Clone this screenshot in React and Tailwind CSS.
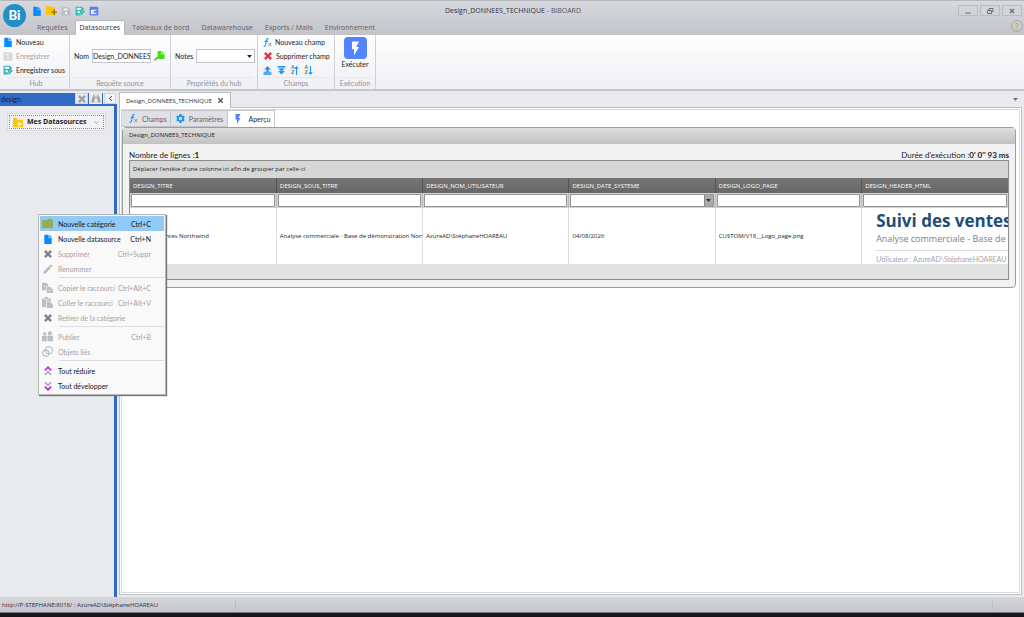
import { LuChevronLeft, LuChevronDown } from 'react-icons/lu';
import { MdSettings, MdFlashOn, MdEdit } from 'react-icons/md';
import { FaBinoculars } from 'react-icons/fa';

const FileIcon = ({ className = 'text-[#0a8cff]' }) => (
  <svg viewBox="0 0 16 16" className={`h-[10px] w-[10px] shrink-0 ${className}`} fill="currentColor">
    <path d="M3 1h6v5h5v9a1 1 0 0 1-1 1H3a1 1 0 0 1-1-1V2a1 1 0 0 1 1-1z" />
    <path d="M10 1l4 4h-4z" />
  </svg>
);

const SaveIcon = ({ className = 'text-[#d3d4d7]' }) => (
  <svg viewBox="0 0 16 16" className={`h-[10px] w-[10px] shrink-0 ${className}`}>
    <path d="M1 2h11l3 3v10H1z" fill="currentColor" />
    <path d="M4 4h7v3H4z" fill="#f0f0f2" />
    <circle cx="8" cy="11" r="2" fill="#f0f0f2" />
  </svg>
);

const SaveAsIcon = () => (
  <svg viewBox="0 0 16 16" className="h-[10px] w-[10px] shrink-0">
    <path d="M1 1h10l3 3v5l-5 6H1z" fill="#35b8b4" />
    <path d="M3 3h7v3H3z" fill="#fff" />
    <circle cx="6" cy="10" r="2" fill="#fff" />
    <path d="M8 13l6-6 2 2-6 6H8z" fill="#27a39f" stroke="#fff" strokeWidth="0.8" />
  </svg>
);

const FolderPlusIcon = () => (
  <svg viewBox="0 0 16 16" className="h-[11px] w-[11px] shrink-0">
    <path d="M0 1h5l2 2h6v11H0z" fill="#fdc504" />
    <path d="M12 6v9M7.500 10.500h9" stroke="#a8780c" strokeWidth="2.200" />
  </svg>
);

const WindowIcon = () => (
  <svg viewBox="0 0 16 16" className="h-[10px] w-[10px] shrink-0">
    <rect x="1" y="1" width="14" height="14" rx="2" fill="#5a7ff2" />
    <path d="M3 6h9v7H3z" fill="#e8eeff" />
    <path d="M8 8h6v3H8z" fill="#5a7ff2" />
  </svg>
);

const CrossIcon = ({ className = 'text-[#828386]' }) => (
  <svg viewBox="0 0 16 16" className={`h-[10px] w-[10px] shrink-0 ${className}`}>
    <path d="M3 3l10 10M13 3L3 13" stroke="currentColor" strokeWidth="4" />
  </svg>
);

const FolderIcon = () => (
  <svg viewBox="0 0 16 16" className="h-[11px] w-[11px] shrink-0" fill="#96ad58">
    <path d="M0 3h8l1-2h5v2h2v12H0z" />
  </svg>
);

const LinkedIcon = () => (
  <svg viewBox="0 0 16 16" className="h-[11px] w-[11px] shrink-0" fill="none" stroke="#b9babc" strokeWidth="1.500">
    <circle cx="10" cy="6" r="5" />
    <circle cx="5.500" cy="10.500" r="4.500" />
  </svg>
);

const CopyIcon = () => (
  <svg viewBox="0 0 16 16" className="h-[11px] w-[11px] shrink-0" fill="#bdbec0">
    <path d="M0 1h6l3 3v2H6v6H0z" />
    <path d="M7 7h5l4 4v5H7z" />
    <path d="M2 6h3M9 12h5" stroke="#eee" strokeWidth="1.200" />
  </svg>
);

const PasteIcon = () => (
  <svg viewBox="0 0 16 16" className="h-[11px] w-[11px] shrink-0" fill="#bdbec0">
    <path d="M0 2h4V0h5v2h4v4H6v9H0z" />
    <path d="M7 7h5l4 4v5H7z" />
    <path d="M3 4h7" stroke="#eee" strokeWidth="1.200" />
  </svg>
);

const PublishIcon = () => (
  <svg viewBox="0 0 16 16" className="h-[11px] w-[11px] shrink-0" fill="#bdbec0">
    <circle cx="4" cy="4" r="2.500" />
    <circle cx="11.500" cy="3.500" r="3" />
    <path d="M0 7h7v8H0zM8 7h8v8H8z" />
  </svg>
);

const FxIcon = () => (
  <svg viewBox="0 0 16 16" className="h-[9px] w-[9px] shrink-0" fill="none" stroke="#1e93f5">
    <path d="M10 1.500C8 .5 6.800 1.500 6.300 4L4.500 12c-.5 2.300-1.500 3-3.500 2.300M3 6h6" strokeWidth="2" />
    <path d="M9.500 8.500l5.500 6M15 8.500l-5.500 6" strokeWidth="1.600" stroke="#6a8fb5" />
  </svg>
);

const MoveUpIcon = () => (
  <svg viewBox="0 0 16 16" className="h-[9px] w-[9px]" fill="#1e93f5">
    <path d="M8 0l6 6h-4v4H6V6H2zM1 10h14v2H1zM1 13h14v2.500H1z" />
  </svg>
);

const MoveDownIcon = () => (
  <svg viewBox="0 0 16 16" className="h-[9px] w-[9px]" fill="#1e93f5">
    <path d="M1 0h14v2.500H1zM3 4h10v2H3zM6 6h4v3h4l-6 6-6-6h4z" />
  </svg>
);

const SortIcon = ({ down }) => (
  <span className="flex items-center">
    <span className="text-[5px]/[5px] font-bold text-[#666]">A<br />Z</span>
    <svg viewBox="0 0 8 16" className={`h-[9px] w-[5px] ${down ? 'rotate-180' : ''}`} fill="#1e93f5">
      <path d="M4 0l4 5H5v11H3V5H0z" />
    </svg>
  </span>
);

const LinkPlugIcon = () => (
  <svg viewBox="0 0 18 16" className="h-[10px] w-[11px] shrink-0">
    <path d="M1 15l5-5" stroke="#999" strokeWidth="3" />
    <path d="M6 0h6v5h5v8H6z" fill="#3fe012" />
    <path d="M13 0l4 4h-4z" fill="#3fe012" />
  </svg>
);

const DoubleChevron = ({ down }) => (
  <svg viewBox="0 0 16 16" className={`h-[10px] w-[10px] ${down ? 'rotate-180' : ''}`} fill="none" strokeWidth="2.600">
    <path d="M3 7l5-5 5 5" stroke="#c818ee" />
    <path d="M3 14l5-5 5 5" stroke="#a8a8a8" />
  </svg>
);

const Caret = ({ className = '' }) => (
  <svg viewBox="0 0 8 5" className={`h-[3px] w-[5px] ${className}`} fill="currentColor">
    <path d="M0 0h8L4 5z" />
  </svg>
);

const ribbonTabs = ['Requêtes', 'Datasources', 'Tableaux de bord', 'Datawarehouse', 'Exports / Mails', 'Environnement'];

const columns = [
  { name: 'DESIGN_TITRE', value: 'Suivi des ventes Northwind' },
  { name: 'DESIGN_SOUS_TITRE', value: 'Analyse commerciale - Base de démonstration Northwind' },
  { name: 'DESIGN_NOM_UTILISATEUR', value: 'AzureAD\\StéphaneHOAREAU' },
  { name: 'DESIGN_DATE_SYSTEME', value: '04/08/2026', date: true },
  { name: 'DESIGN_LOGO_PAGE', value: 'CUSTOM/V18__Logo_page.png' },
  { name: 'DESIGN_HEADER_HTML', html: true },
];

const menuGroups = [
  [
    { label: 'Nouvelle catégorie', keys: 'Ctrl+C', icon: <FolderIcon />, active: true },
    { label: 'Nouvelle datasource', keys: 'Ctrl+N', icon: <FileIcon /> },
    { label: 'Supprimer', keys: 'Ctrl+Suppr', icon: <CrossIcon />, disabled: true },
    { label: 'Renommer', icon: <MdEdit className="h-[12px] w-[12px] text-[#b9babc]" />, disabled: true },
  ],
  [
    { label: 'Copier le raccourci', keys: 'Ctrl+Alt+C', icon: <CopyIcon />, disabled: true },
    { label: 'Coller le raccourci', keys: 'Ctrl+Alt+V', icon: <PasteIcon />, disabled: true },
    { label: 'Retirer de la catégorie', icon: <CrossIcon />, disabled: true },
  ],
  [
    { label: 'Publier', keys: 'Ctrl+B', icon: <PublishIcon />, disabled: true },
    { label: 'Objets liés', icon: <LinkedIcon />, disabled: true },
  ],
  [
    { label: 'Tout réduire', icon: <DoubleChevron /> },
    { label: 'Tout développer', icon: <DoubleChevron down /> },
  ],
];

const RibbonGroup = ({ title, className, children }) => (
  <section className={`flex flex-col border-r border-[#cfd0d5] ${className}`}>
    <div className="flex grow flex-col justify-center">{children}</div>
    <h2 className="mx-1 border-t border-[#e6e7ea] pb-px text-center text-[7px]/[10px] text-[#92939c]">{title}</h2>
  </section>
);

const RibbonButton = ({ icon, label, disabled }) => (
  <button disabled={disabled} className="flex h-[14px] items-center gap-[3px] whitespace-nowrap disabled:text-[#a3a4a8]">
    {icon}
    {label}
  </button>
);

const TitleBar = () => (
  <header className="relative bg-linear-to-b from-[#d9dade] to-[#c3c4ca]">
    <div className="grid h-[20px] grid-cols-[1fr_auto_1fr] items-center border-t border-[#b8b9be] pr-[2px]">
      <div className="flex items-center gap-1 pl-[32px]">
        <button aria-label="Nouveau"><FileIcon /></button>
        <button aria-label="Nouvelle catégorie"><FolderPlusIcon /></button>
        <button aria-label="Enregistrer"><SaveIcon className="text-[#bcbdc1]" /></button>
        <button aria-label="Enregistrer sous"><SaveAsIcon /></button>
        <button aria-label="Fenêtre"><WindowIcon /></button>
      </div>
      <h1 className="pl-1 font-['Open_Sans',sans-serif] text-[#55565f]">
        <span className="text-[#2c2d3a]">Design_DONNEES_TECHNIQUE</span> - BiBOARD
      </h1>
      <div className="flex justify-end gap-[2px] text-[#6d6e78]">
        <button aria-label="Réduire" className="grid h-[11px] w-[20px] place-items-center border border-[#bcbdc3] bg-[#d4d5da]">
          <svg viewBox="0 0 8 8" className="h-2 w-2"><path d="M1 6h6" stroke="currentColor" /></svg>
        </button>
        <button aria-label="Restaurer" className="grid h-[11px] w-[20px] place-items-center border border-[#bcbdc3] bg-[#d4d5da]">
          <svg viewBox="0 0 8 8" className="h-2 w-2" fill="none" stroke="currentColor"><path d="M3 3V1.500h4v3H5.500M1.500 3.500h4v3h-4z" /></svg>
        </button>
        <button aria-label="Fermer" className="grid h-[11px] w-[20px] place-items-center border border-[#bcbdc3] bg-[#d4d5da]">
          <svg viewBox="0 0 8 8" className="h-2 w-2"><path d="M2 2l4 4M6 2L2 6" stroke="currentColor" strokeWidth="1.300" /></svg>
        </button>
      </div>
    </div>
    <nav className="flex h-[15px] items-stretch pl-[31px] font-['Open_Sans',sans-serif] text-[#5d5e6a]">
      {ribbonTabs.map((tab) => (
        <button
          key={tab}
          className={tab === 'Datasources' ? 'mx-px border border-b-0 border-[#b9bac0] bg-white px-1 text-[#2c2d3a]' : 'px-[6px]'}
        >
          {tab}
        </button>
      ))}
    </nav>
    <div className="absolute top-[4px] left-[3px] grid h-[23px] w-[23px] place-items-center rounded-full bg-[#1f8fcc] text-[13px]/[13px] font-black text-white">
      Bi
    </div>
    <button aria-label="Aide" className="absolute right-px bottom-[3px] grid h-[12px] w-[12px] place-items-center rounded-full border border-[#a9aab0] text-[10px]/[10px] font-bold text-[#f5a81c]">
      ?
    </button>
  </header>
);

const Ribbon = () => (
  <div className="flex h-[56px] border-b-2 border-[#c5c6cc] bg-linear-to-b from-white to-[#eff0f4] text-[#22232b]">
    <RibbonGroup title="Hub" className="w-[70px] pl-[3px]">
      <RibbonButton icon={<FileIcon />} label="Nouveau" />
      <RibbonButton icon={<SaveIcon />} label="Enregistrer" disabled />
      <RibbonButton icon={<SaveAsIcon />} label="Enregistrer sous" />
    </RibbonGroup>
    <RibbonGroup title="Requête source" className="w-[101px]">
      <div className="flex items-center gap-[3px] pl-1">
        <label htmlFor="nom">Nom</label>
        <input id="nom" defaultValue="Design_DONNEES_TECHNIQUE" className="h-[14px] w-[59px] border border-[#c3c4cb] bg-white" />
        <button aria-label="Lier"><LinkPlugIcon /></button>
      </div>
    </RibbonGroup>
    <RibbonGroup title="Propriétés du hub" className="w-[87px]">
      <div className="flex items-center gap-[3px] pl-1">
        <label htmlFor="notes">Notes</label>
        <div className="relative">
          <select id="notes" className="block h-[14px] w-[59px] appearance-none border border-[#c3c4cb] bg-white">
            <option></option>
          </select>
          <Caret className="pointer-events-none absolute top-[6px] right-[3px]" />
        </div>
      </div>
    </RibbonGroup>
    <RibbonGroup title="Champs" className="w-[77px]">
      <div className="pl-[5px]">
        <RibbonButton icon={<FxIcon />} label="Nouveau champ" />
        <RibbonButton icon={<CrossIcon className="text-[#e8324f]" />} label="Supprimer champ" />
        <div className="flex h-[14px] items-center gap-[5px]">
          <button aria-label="Monter"><MoveUpIcon /></button>
          <button aria-label="Descendre"><MoveDownIcon /></button>
          <button aria-label="Tri croissant"><SortIcon /></button>
          <button aria-label="Tri décroissant"><SortIcon down /></button>
        </div>
      </div>
    </RibbonGroup>
    <RibbonGroup title="Exécution" className="w-[41px]">
      <button className="flex h-full flex-col items-center pt-[2px]">
        <span className="grid h-[22px] w-[23px] place-items-center rounded-sm bg-[#5384ff]">
          <MdFlashOn className="h-[17px] w-[17px] text-white" />
        </span>
        Exécuter
      </button>
    </RibbonGroup>
  </div>
);

const ContextMenu = () => (
  <div role="menu" className="absolute top-[123px] left-[38px] z-10 w-[128px] border border-[#b5b6b9] bg-[#f9f9f9] p-px shadow-[1px_1px_1px_#777]">
    {menuGroups.map((group, index) => (
      <div key={index}>
        {index > 0 && <hr className="my-px ml-[19px] h-[2px] border-0 border-t border-[#dcdde0]" />}
        {group.map((item) => (
          <button
            key={item.label}
            role="menuitem"
            disabled={item.disabled}
            className={`flex h-[15px] w-full items-center pr-[13px] pl-[2px] whitespace-nowrap text-[#17171c] disabled:text-[#a2a3a6] ${item.active ? 'bg-[#91c9f7]' : ''}`}
          >
            <span className="grid w-[11px] place-items-center">{item.icon}</span>
            <span className="ml-[5px] grow text-left">{item.label}</span>
            <span>{item.keys}</span>
          </button>
        ))}
      </div>
    ))}
  </div>
);

const Sidebar = () => (
  <aside className="flex w-[117px] shrink-0 flex-col pt-[2px]">
    <div className="flex h-[11px] items-stretch">
      <input aria-label="Recherche" defaultValue="design" className="w-[75px] bg-[#316ac5] px-px text-[#16233f]" />
      <button aria-label="Effacer" className="grid w-[13px] place-items-center border border-[#d3d4d7] bg-[#ececee]">
        <CrossIcon className="text-[#a0a1a3]" />
      </button>
      <button aria-label="Rechercher" className="grid w-[15px] place-items-center border-x border-[#316ac5] bg-[#ececee]">
        <FaBinoculars className="h-[9px] w-[10px] text-[#a0a1a3]" />
      </button>
      <button aria-label="Replier" className="ml-px grid w-[12px] place-items-center border border-[#d3d4d7] bg-[#f4f4f6]">
        <LuChevronLeft className="h-[9px] w-[9px]" />
      </button>
    </div>
    <div className="grow border-t-2 border-r-[3px] border-[#316ac5] bg-[#e9eaee] pt-[7px] pl-[7px]">
      <div className="w-[99px] border border-[#dcdde1] bg-[#f3f3f5] p-px">
        <button className="flex h-[14px] w-full items-center border border-dotted border-[#8b8c92] px-[3px] font-['Open_Sans',sans-serif] font-bold text-[#1c1c22]">
          <svg viewBox="0 0 18 16" className="mr-[2px] h-[11px] w-[12px] shrink-0">
            <path d="M0 1h6v3h9v11H0z" fill="#fdc504" />
            <path d="M7 6l9 4-9 5z" fill="#fff6d0" stroke="#fdc504" />
          </svg>
          Mes Datasources
          <LuChevronDown className="ml-auto h-[7px] w-[7px] text-[#777]" />
        </button>
      </div>
    </div>
  </aside>
);

const HtmlHeader = () => (
  <div className="overflow-hidden pl-[11px] whitespace-nowrap">
    <p className="text-[17px]/[23px] font-bold text-[#1f4e79]">Suivi des ventes Northwind</p>
    <p className="pb-[4px] text-[9px]/[14px] text-[#7f8084]">Analyse commerciale - Base de démonstration</p>
    <p className="border-t border-[#dcdcdc] pt-[3px] font-['Lato',sans-serif] text-[7px]/[10px] text-[#a3a4a8]">Utilisateur : AzureAD\StéphaneHOAREAU</p>
  </div>
);

const DataGrid = () => (
  <div className="border border-[#8c8c8c] bg-[#e1e3e2] pb-[15px] font-['Open_Sans',sans-serif]">
    <p className="h-[17px] bg-[#d6d8d7] px-[3px] text-[6px]/[16px]">Déplacer l'entête d'une colonne ici afin de grouper par celle-ci</p>
    <table className="w-full table-fixed border-collapse">
      <thead>
        <tr className="h-[15px] bg-linear-to-b from-[#757575] to-[#676767] text-left text-white">
          {columns.map((column) => (
            <th key={column.name} className="border-r border-[#555] px-[3px] py-0 text-[6px]/[14px] font-normal last:border-r-0">{column.name}</th>
          ))}
        </tr>
        <tr className="bg-[#d3d3d3]">
          {columns.map((column) => (
            <td key={column.name} className="border-r border-[#bcbcbc] p-px last:border-r-0">
              <div className="flex h-[13px] border border-[#969696] bg-white">
                <input aria-label={`Filtre ${column.name}`} className="min-w-0 grow px-px" />
                {column.date && (
                  <button aria-label="Choisir une date" className="grid w-[9px] shrink-0 place-items-center border-l border-[#888] bg-[#a9a9a9] text-[#333]">
                    <Caret />
                  </button>
                )}
              </div>
            </td>
          ))}
        </tr>
      </thead>
      <tbody>
        <tr className="h-[56px] bg-white">
          {columns.map((column) => (
            <td key={column.name} className="overflow-hidden border-r border-[#dedede] py-0 pl-[3px] text-[6px] whitespace-nowrap text-[#222] last:border-r-0">
              {column.html ? <HtmlHeader /> : column.value}
            </td>
          ))}
        </tr>
      </tbody>
    </table>
  </div>
);

const Workspace = () => (
  <main className="flex min-w-0 grow flex-col pt-px pr-[2px] pb-[2px] pl-[2px]">
    <div className="flex items-center justify-between pr-1">
      <div className="z-[1] -mb-px flex h-[16px] items-center gap-[5px] border border-b-0 border-[#b9bac0] bg-white px-[6px] font-['Open_Sans',sans-serif] text-[6px] text-[#2c2d3a]">
        Design_DONNEES_TECHNIQUE
        <button aria-label="Fermer l'onglet">
          <svg viewBox="0 0 8 8" className="h-[7px] w-[7px]"><path d="M1.500 1.500l5 5M6.500 1.500l-5 5" stroke="#55565f" strokeWidth="1.500" /></svg>
        </button>
      </div>
      <button aria-label="Liste des onglets" className="text-[#6d6e78]"><Caret /></button>
    </div>
    <div className="flex grow flex-col border border-[#c0c1c8] bg-white p-px">
      <div className="grow border border-[#d9dae0] pr-[3px]">
        <div className="flex h-[17px] items-stretch text-[#5d5e6a]">
          <button className="flex items-center gap-1 border border-l-0 border-[#c3c4cb] bg-[#e0e1e6] pr-[3px] pl-[7px]">
            <FxIcon />Champs
          </button>
          <button className="flex items-center gap-[3px] border border-l-0 border-[#c3c4cb] bg-[#e0e1e6] px-1">
            <MdSettings className="h-[11px] w-[11px] text-[#1e93f5]" />Paramètres
          </button>
          <button className="flex items-center gap-1 border border-b-0 border-l-0 border-[#c3c4cb] bg-white px-1 text-[#2c2d3a]">
            <MdFlashOn className="h-[12px] w-[12px] text-[#5384ff]" />Aperçu
          </button>
        </div>
        <section className="rounded-sm border border-[#9d9d9d] bg-[#f2f2f2] text-[#222]">
          <h2 className="h-[16px] bg-linear-to-b from-[#dedede] to-[#c2c2c2] px-[6px] font-['Open_Sans',sans-serif] text-[6px]/[15px]">Design_DONNEES_TECHNIQUE</h2>
          <div className="px-[6px] pt-[6px] pb-[7px]">
            <div className="flex justify-between text-[8px]/[10px]">
              <p>Nombre de lignes :<b>1</b></p>
              <p>Durée d'exécution :<b>0' 0'' 93 ms</b></p>
            </div>
            <DataGrid />
          </div>
        </section>
      </div>
    </div>
  </main>
);

const App = () => {
  return (
    <div className="flex min-h-screen flex-col bg-[#e9eaee] font-['Lato',sans-serif] text-[7px]/[10px]">
      <TitleBar />
      <Ribbon />
      <div className="relative flex grow">
        <Sidebar />
        <Workspace />
        <ContextMenu />
      </div>
      <footer className="flex h-[15px] items-center bg-linear-to-b from-[#d6d7db] to-[#c5c6cc] px-[2px] font-['Open_Sans',sans-serif] text-[6px] text-[#2c2d3a]">
        <span className="w-[234px] border-r border-[#bdbec4]">http://P-STEPHANE:8018/ : AzureAD\StéphaneHOAREAU</span>
        <span className="mr-[29px] ml-auto h-[10px] border-r border-[#bdbec4]" />
      </footer>
      <div className="h-[5px] border-t border-[#77787c] bg-[#161616]" />
    </div>
  );
};

export default App;
